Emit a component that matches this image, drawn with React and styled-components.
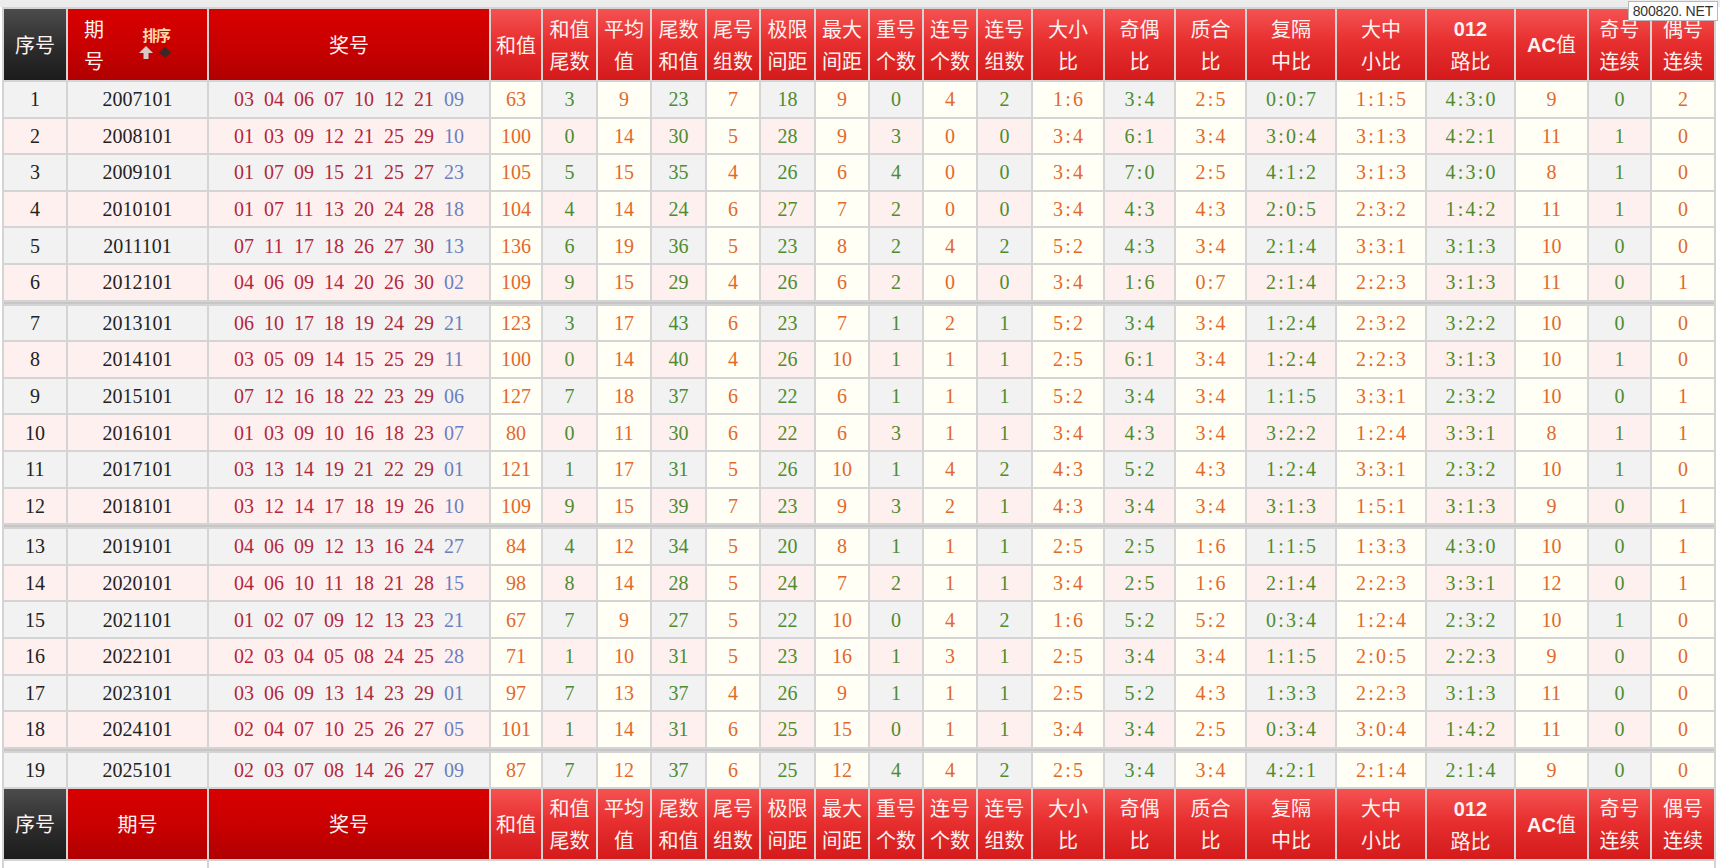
import React from "react";
import styled, { createGlobalStyle } from "styled-components";

const GlobalStyle = createGlobalStyle`
  html, body {
    margin: 0;
    padding: 0;
    background: #ffffff;
    font-family: "Liberation Serif", "Noto Sans CJK SC", serif;
  }
`;

const widths = [62, 139, 280, 50, 53, 52, 53, 52, 53, 52, 52, 52, 53, 70, 69, 69, 88, 88, 87, 71, 61, 62];

const heads = [
  ["和值"],
  ["和值", "尾数"],
  ["平均", "值"],
  ["尾数", "和值"],
  ["尾号", "组数"],
  ["极限", "间距"],
  ["最大", "间距"],
  ["重号", "个数"],
  ["连号", "个数"],
  ["连号", "组数"],
  ["大小", "比"],
  ["奇偶", "比"],
  ["质合", "比"],
  ["复隔", "中比"],
  ["大中", "小比"],
  ["012", "路比"],
  ["AC值"],
  ["奇号", "连续"],
  ["偶号", "连续"],
];

const raw = [
  "2007101|03 04 06 07 10 12 21|09|63 3 9 23 7 18 9 0 4 2 1:6 3:4 2:5 0:0:7 1:1:5 4:3:0 9 0 2",
  "2008101|01 03 09 12 21 25 29|10|100 0 14 30 5 28 9 3 0 0 3:4 6:1 3:4 3:0:4 3:1:3 4:2:1 11 1 0",
  "2009101|01 07 09 15 21 25 27|23|105 5 15 35 4 26 6 4 0 0 3:4 7:0 2:5 4:1:2 3:1:3 4:3:0 8 1 0",
  "2010101|01 07 11 13 20 24 28|18|104 4 14 24 6 27 7 2 0 0 3:4 4:3 4:3 2:0:5 2:3:2 1:4:2 11 1 0",
  "2011101|07 11 17 18 26 27 30|13|136 6 19 36 5 23 8 2 4 2 5:2 4:3 3:4 2:1:4 3:3:1 3:1:3 10 0 0",
  "2012101|04 06 09 14 20 26 30|02|109 9 15 29 4 26 6 2 0 0 3:4 1:6 0:7 2:1:4 2:2:3 3:1:3 11 0 1",
  "2013101|06 10 17 18 19 24 29|21|123 3 17 43 6 23 7 1 2 1 5:2 3:4 3:4 1:2:4 2:3:2 3:2:2 10 0 0",
  "2014101|03 05 09 14 15 25 29|11|100 0 14 40 4 26 10 1 1 1 2:5 6:1 3:4 1:2:4 2:2:3 3:1:3 10 1 0",
  "2015101|07 12 16 18 22 23 29|06|127 7 18 37 6 22 6 1 1 1 5:2 3:4 3:4 1:1:5 3:3:1 2:3:2 10 0 1",
  "2016101|01 03 09 10 16 18 23|07|80 0 11 30 6 22 6 3 1 1 3:4 4:3 3:4 3:2:2 1:2:4 3:3:1 8 1 1",
  "2017101|03 13 14 19 21 22 29|01|121 1 17 31 5 26 10 1 4 2 4:3 5:2 4:3 1:2:4 3:3:1 2:3:2 10 1 0",
  "2018101|03 12 14 17 18 19 26|10|109 9 15 39 7 23 9 3 2 1 4:3 3:4 3:4 3:1:3 1:5:1 3:1:3 9 0 1",
  "2019101|04 06 09 12 13 16 24|27|84 4 12 34 5 20 8 1 1 1 2:5 2:5 1:6 1:1:5 1:3:3 4:3:0 10 0 1",
  "2020101|04 06 10 11 18 21 28|15|98 8 14 28 5 24 7 2 1 1 3:4 2:5 1:6 2:1:4 2:2:3 3:3:1 12 0 1",
  "2021101|01 02 07 09 12 13 23|21|67 7 9 27 5 22 10 0 4 2 1:6 5:2 5:2 0:3:4 1:2:4 2:3:2 10 1 0",
  "2022101|02 03 04 05 08 24 25|28|71 1 10 31 5 23 16 1 3 1 2:5 3:4 3:4 1:1:5 2:0:5 2:2:3 9 0 0",
  "2023101|03 06 09 13 14 23 29|01|97 7 13 37 4 26 9 1 1 1 2:5 5:2 4:3 1:3:3 2:2:3 3:1:3 11 0 0",
  "2024101|02 04 07 10 25 26 27|05|101 1 14 31 6 25 15 0 1 1 3:4 3:4 2:5 0:3:4 3:0:4 1:4:2 11 0 0",
  "2025101|02 03 07 08 14 26 27|09|87 7 12 37 6 25 12 4 4 2 2:5 3:4 3:4 4:2:1 2:1:4 2:1:4 9 0 0",
];

const draws = raw.map((line, i) => {
  const [period, reds, blue, stats] = line.split("|");
  return { no: i + 1, period, reds: reds.split(" "), blue, stats: stats.split(" ") };
});

const Page = styled.div`
  position: relative;
  width: 1720px;
  height: 868px;
  overflow: hidden;
`;

const TopStrip = styled.div`
  height: 7px;
  background: #ececec;
`;

const Watermark = styled.div`
  position: absolute;
  top: 1px;
  right: 2px;
  padding: 1px 4px;
  background: #ffffff;
  border: 1px solid #b8b8b8;
  color: #333333;
  font: 14px "Liberation Sans", Arial, sans-serif;
  letter-spacing: -0.2px;
`;

const Table = styled.table`
  margin-left: 2px;
  table-layout: fixed;
  border-collapse: separate;
  border-spacing: 2px;
  background: #d4d4d4;
`;

const headBg = {
  dark: "linear-gradient(to bottom, #4c4c4c 0%, #2a2a2a 60%, #1c1c1c 100%)",
  deep: "linear-gradient(to bottom, #d90000 0%, #c80000 55%, #b00000 100%)",
  red: "linear-gradient(to bottom, #f55252 0%, #e83030 45%, #d41a1a 100%)",
};

const HeadCell = styled.th`
  height: ${(p) => p.$h}px;
  padding: 0;
  background: ${(p) => headBg[p.$variant]};
  color: #fff2f0;
  font-family: "Noto Sans CJK SC", "Liberation Sans", sans-serif;
  font-size: 20px;
  font-weight: 400;
  line-height: 32px;
  text-align: center;
  vertical-align: middle;
`;

const Line = styled.span`
  display: block;
`;

const Latin = styled.span`
  font-family: "Liberation Sans", Arial, sans-serif;
  font-weight: 700;
`;

const PeriodHead = styled.div`
  display: flex;
  align-items: center;
  padding-left: 16px;
  gap: 35px;
`;

const SortBox = styled.div`
  display: flex;
  flex-direction: column;
  align-items: center;
  gap: 3px;
  padding-bottom: 4px;
`;

const SortLabel = styled.span`
  color: #ffd9a8;
  font-size: 15px;
  font-weight: 700;
  line-height: 16px;
  letter-spacing: -1.5px;
`;

const cellBg = { grey: "#f2f2f2", pink: "#fff0f0", cream: "#fffff5", white: "#ffffff" };
const ink = { dark: "#222222", orange: "#e2692c", green: "#4e8c2e" };

const Cell = styled.td`
  height: ${(p) => p.$h || 34.6}px;
  padding: 0;
  background: ${(p) => cellBg[p.$bg]};
  color: ${(p) => ink[p.$ink || "dark"]};
  font-size: 20px;
  line-height: 22px;
  text-align: center;
  vertical-align: middle;
  white-space: nowrap;
`;

const Colon = styled.span`
  display: inline-block;
  width: 10px;
  text-align: center;
`;

const Gap = styled.td`
  height: 2px;
  padding: 0;
  background: #c6c6c6;
`;

const Ball = styled.span`
  display: inline-block;
  width: 20px;
  margin: 0 5px;
  color: ${(p) => (p.$blue ? "#6a7fc0" : "#b3273c")};
`;

const SortArrows = () => (
  <svg width="34" height="13" viewBox="0 0 34 13">
    <polygon points="7,0 14,7 0,7" fill="#d9c9c6" />
    <rect x="4.5" y="7" width="5" height="6" fill="#d9c9c6" />
    <polygon points="26,1 32,6.5 26,12 20,6.5" fill="#3b2727" />
  </svg>
);

const HeadText = ({ t }) => {
  if (t === "012") return <Latin>012</Latin>;
  if (t === "AC值")
    return (
      <>
        <Latin>AC</Latin>值
      </>
    );
  return t;
};

const HeaderRow = ({ footer }) => {
  const h = footer ? 70 : 71;
  return (
    <tr>
      <HeadCell $variant="dark" $h={h}>序号</HeadCell>
      <HeadCell $variant="deep" $h={h}>
        {footer ? (
          "期号"
        ) : (
          <PeriodHead>
            <div>
              <Line>期</Line>
              <Line>号</Line>
            </div>
            <SortBox>
              <SortLabel>排序</SortLabel>
              <SortArrows />
            </SortBox>
          </PeriodHead>
        )}
      </HeadCell>
      <HeadCell $variant="deep" $h={h}>奖号</HeadCell>
      {heads.map((lines, i) => (
        <HeadCell key={i} $variant="red" $h={h}>
          {lines.map((t) => (
            <Line key={t}>
              <HeadText t={t} />
            </Line>
          ))}
        </HeadCell>
      ))}
    </tr>
  );
};

const StatValue = ({ v }) =>
  v.split(":").map((part, i) => (
    <React.Fragment key={i}>
      {i > 0 && <Colon>:</Colon>}
      {part}
    </React.Fragment>
  ));

const DrawRow = ({ d }) => {
  const base = d.no % 2 === 1 ? "grey" : "pink";
  return (
    <tr>
      <Cell $bg={base}>{d.no}</Cell>
      <Cell $bg={base}>{d.period}</Cell>
      <Cell $bg={base}>
        {d.reds.map((n, i) => (
          <Ball key={i}>{n}</Ball>
        ))}
        <Ball $blue>{d.blue}</Ball>
      </Cell>
      {d.stats.map((v, i) => (
        <Cell key={i} $bg={i % 2 === 0 ? "cream" : base} $ink={i % 2 === 0 ? "orange" : "green"}>
          <StatValue v={v} />
        </Cell>
      ))}
    </tr>
  );
};

const GapRow = () => (
  <tr>
    <Gap colSpan={22} />
  </tr>
);

export default function App() {
  return (
    <Page>
      <GlobalStyle />
      <TopStrip />
      <Table>
        <colgroup>
          {widths.map((w, i) => (
            <col key={i} style={{ width: w }} />
          ))}
        </colgroup>
        <thead>
          <HeaderRow />
        </thead>
        <tbody>
          {draws.map((d) => (
            <React.Fragment key={d.no}>
              <DrawRow d={d} />
              {d.no % 6 === 0 && <GapRow />}
            </React.Fragment>
          ))}
          <HeaderRow footer />
          <tr>
            <Cell $bg="white" $h={30} colSpan={2} />
            <Cell $bg="white" $h={30} colSpan={20} />
          </tr>
        </tbody>
      </Table>
      <Watermark>800820. NET</Watermark>
    </Page>
  );
}
